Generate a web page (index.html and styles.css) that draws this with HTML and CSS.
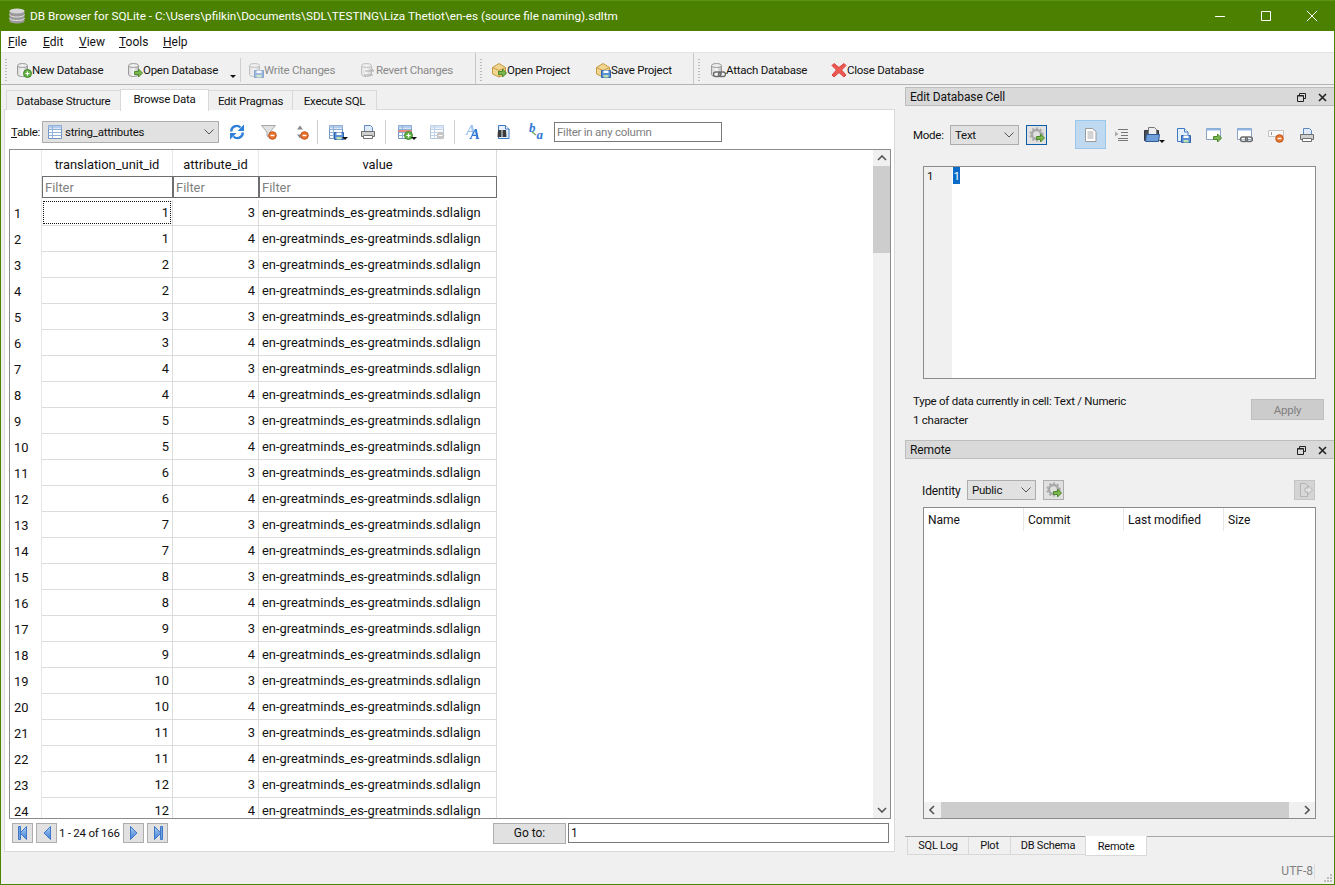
FILE: index.html
```html
<!DOCTYPE html>
<html lang="en">
<head>
    <meta charset="UTF-8">
    <title>DB Browser for SQLite</title>
    <link rel="stylesheet" href="styles.css">
</head>
<body>
    <svg class="sprites" width="0" height="0">
        <defs>
            <linearGradient id="steel" x1="0" x2="1" y1="0" y2="0">
                <stop offset="0" stop-color="#d8d8d8"/><stop offset=".5" stop-color="#f6f6f6"/><stop offset="1" stop-color="#b4b4b4"/>
            </linearGradient>
            <linearGradient id="blue" x1="0" x2="0" y1="0" y2="1">
                <stop offset="0" stop-color="#a9cdf4"/><stop offset="1" stop-color="#3f7fd4"/>
            </linearGradient>
            <symbol id="stack" viewBox="0 0 16 16">
                <path d="M.5 3v10c0 1.400 3.300 2.500 7.500 2.500s7.500-1.100 7.500-2.500V3z" fill="#9a9a9a"/>
                <ellipse cx="8" cy="3" rx="7.500" ry="2.500" fill="#d6d6d6"/>
                <path d="M.5 6.500c0 1.400 3.300 2.500 7.500 2.500s7.500-1.100 7.500-2.500M.5 10c0 1.400 3.300 2.500 7.500 2.500s7.500-1.100 7.500-2.500" fill="none" stroke="#e6e6e6"/>
            </symbol>
            <symbol id="db" viewBox="0 0 16 16">
                <path d="M1.500 3.500v9c0 1.200 2.200 2 5 2s5-.8 5-2v-9z" fill="url(#steel)" stroke="#9a9a9a"/>
                <ellipse cx="6.500" cy="3.500" rx="5" ry="2" fill="#eee" stroke="#9a9a9a"/>
            </symbol>
            <symbol id="green-arrow" viewBox="0 0 16 16">
                <path d="M7.500 9.500h4V7l4 4-4 4v-2.500h-4z" fill="#7db650" stroke="#4c8a2c"/>
            </symbol>
            <symbol id="plus-badge" viewBox="0 0 16 16">
                <circle cx="11.500" cy="11.500" r="4" fill="#66b04a" stroke="#3f8a2c"/>
                <path d="M11.500 9.500v4M9.500 11.500h4" stroke="#fff" stroke-width="1.200"/>
            </symbol>
            <symbol id="minus-badge" viewBox="0 0 16 16">
                <circle cx="11.500" cy="11.500" r="3.800" fill="#e8732c" stroke="#c2541a"/>
                <path d="M9.500 11.500h4" stroke="#fff" stroke-width="1.400"/>
            </symbol>
            <symbol id="floppy" viewBox="0 0 16 16">
                <path d="M6.500 8.500h9v7h-9z" fill="#5b8fd6" stroke="#2f64ad"/>
                <path d="M8.500 8.500h5v2.500h-5z" fill="#fff"/>
                <path d="M8.500 13h5v2.500h-5z" fill="#bfe0b0"/>
            </symbol>
            <symbol id="box" viewBox="0 0 16 16">
                <path d="M1.500 5.500 8 1.500l6.500 4v7L8 15l-6.500-3z" fill="#f2d58e" stroke="#c49a45"/>
                <path d="M1.500 5.500 8 8.500l6.500-3M8 8.500V15" fill="none" stroke="#c49a45"/>
            </symbol>
            <symbol id="page" viewBox="0 0 16 16">
                <path d="M2.500 1.500h7l3.500 3.500v9.500h-10.500z" fill="#e6f0fb" stroke="#3d78c4"/>
                <path d="M9.500 1.500V5H13" fill="#fff" stroke="#3d78c4"/>
            </symbol>
            <symbol id="printer" viewBox="0 0 16 16">
                <path d="M4.500 1.500h6l2 2v4h-8z" fill="#dfeafa" stroke="#5d89c0"/>
                <path d="M1.500 7.500h13v5h-13z" fill="#cfcfcf" stroke="#6f6f6f"/>
                <path d="M3.500 11.500h9v3h-9z" fill="#fff" stroke="#6f6f6f"/>
            </symbol>
            <symbol id="grid" viewBox="0 0 16 16">
                <path d="M1.500 1.500h13v13h-13z" fill="#fff" stroke="#6f94c4"/>
                <path d="M1.500 1.500h13v3h-13z" fill="#b5cdec"/>
                <path d="M5.500 1.500v13M1.500 5.500h13M1.500 8.500h13M1.500 11.500h13" stroke="#8fb0d8"/>
            </symbol>
            <symbol id="window" viewBox="0 0 16 16">
                <path d="M.5 1.500h14v11H.5z" fill="#fff" stroke="#8ba3c2"/>
                <path d="M.5 1.500h14v2H.5z" fill="#8db6e6"/>
            </symbol>
            <symbol id="gear" viewBox="0 0 16 16">
                <circle cx="7.500" cy="7.500" r="4.500" fill="none" stroke="#a8a8a8" stroke-width="2.400"/>
                <circle cx="7.500" cy="7.500" r="6.200" fill="none" stroke="#a8a8a8" stroke-width="1.800" stroke-dasharray="2 2"/>
            </symbol>
            <symbol id="blue-tri" viewBox="0 0 16 16">
                <path d="M11.500 1.500v13L5 8z" fill="url(#blue)" stroke="#3f78c6"/>
            </symbol>
            <symbol id="chain" viewBox="0 0 16 16">
                <rect x="3.500" y="10" width="7" height="4.500" rx="2.200" fill="#fff" fill-opacity=".4" stroke="#6c6c6c" stroke-width="1.400"/>
                <rect x="8.500" y="10" width="7" height="4.500" rx="2.200" fill="none" stroke="#6c6c6c" stroke-width="1.400"/>
            </symbol>
        </defs>
    </svg>

    <div class="window">
        <div class="titlebar">
            <svg class="ico title-ico"><use href="#stack"/></svg>
            <span class="title-text">DB Browser for SQLite - C:\Users\pfilkin\Documents\SDL\TESTING\Liza Thetiot\en-es (source file naming).sdltm</span>
            <div class="win-btns">
                <svg width="46" height="30" viewBox="0 0 46 30"><path d="M18 15.500h10" stroke="#fff"/></svg>
                <svg width="46" height="30" viewBox="0 0 46 30"><path d="M18.500 10.500h9v9h-9z" fill="none" stroke="#fff"/></svg>
                <svg width="46" height="30" viewBox="0 0 46 30"><path d="M18 10l10 10M28 10 18 20" stroke="#fff"/></svg>
            </div>
        </div>

        <div class="menubar">
            <span class="menu-file"><u>F</u>ile</span>
            <span class="menu-edit"><u>E</u>dit</span>
            <span class="menu-view"><u>V</u>iew</span>
            <span class="menu-tools"><u>T</u>ools</span>
            <span class="menu-help"><u>H</u>elp</span>
        </div>

        <div class="toolbars">
            <div class="toolbar tb-file">
                <i class="grip"></i>
                <span class="tool"><svg class="ico"><use href="#db"/><use href="#plus-badge"/></svg>New Database</span>
                <span class="tool"><svg class="ico"><use href="#db"/><use href="#green-arrow"/></svg>Open Database</span>
                <i class="drop"></i>
                <i class="vsep"></i>
                <span class="tool off"><svg class="ico dim"><use href="#db"/><use href="#floppy"/></svg>Write Changes</span>
                <span class="tool off"><svg class="ico dim"><use href="#db"/><path d="M5 9h9M14 9l-2-2M13 13H4M4 13l2 2" stroke="#777" fill="none"/></svg>Revert Changes</span>
            </div>
            <div class="toolbar tb-project">
                <i class="grip"></i>
                <span class="tool"><svg class="ico"><use href="#box"/><use href="#green-arrow"/></svg>Open Project</span>
                <span class="tool"><svg class="ico"><use href="#box"/><use href="#floppy"/></svg>Save Project</span>
            </div>
            <div class="toolbar tb-attach">
                <i class="grip"></i>
                <span class="tool"><svg class="ico"><use href="#db"/><use href="#chain"/></svg>Attach Database</span>
                <span class="tool"><svg class="ico"><path d="M3 1.500 8 5.500l5-4 2 2-4.500 4.500 4.500 5-2 2-5-4.500-5 4.500-2-2L5.500 8 1 3.500z" fill="#ee5a52" stroke="#d8403a"/></svg>Close Database</span>
            </div>
        </div>

        <div class="workspace">
            <div class="left-pane">
                <div class="tabs">
                    <span class="tab tab-structure">Database Structure</span>
                    <span class="tab tab-browse active">Browse Data</span>
                    <span class="tab tab-pragmas">Edit Pragmas</span>
                    <span class="tab tab-sql">Execute SQL</span>
                </div>
                <div class="tab-page">
                    <div class="browse-bar">
                        <span class="table-label"><u>T</u>able:</span>
                        <div class="combo table-combo">
                            <svg class="ico"><use href="#grid"/></svg>
                            <span class="combo-text">string_attributes</span>
                            <svg class="chev" viewBox="0 0 10 6"><path d="M.5.500 5 5 9.500.500" fill="none" stroke="#555"/></svg>
                        </div>
                        <svg class="ico bi-refresh" viewBox="0 0 16 16"><path d="M2.200 7.500A5.500 5.500 0 0 1 11.500 3.500M13.800 8.500A5.500 5.500 0 0 1 4.500 12.500" fill="none" stroke="#2f80d8" stroke-width="2.400"/><path d="M15 .5v6.500H8.500zM1 15.500V9h6.500z" fill="#2f80d8"/></svg>
                        <svg class="ico bi-filter"><path d="M.5 1.500h14L9 8v6l-3-2V8z" fill="#e2e2e2" stroke="#a8a8a8"/><use href="#minus-badge"/></svg>
                        <svg class="ico bi-sort"><path d="M7 1.500l3 4H4zM7 14.500l-3-4h6z" fill="#8a8a8a"/><use href="#minus-badge"/></svg>
                        <i class="vsep bi-sep1"></i>
                        <svg class="ico bi-save"><use href="#grid"/><use href="#floppy"/></svg><i class="drop bi-drop1"></i>
                        <svg class="ico bi-print"><use href="#printer"/></svg>
                        <i class="vsep bi-sep2"></i>
                        <svg class="ico bi-add"><use href="#grid"/><path d="M1.500 6h13v2h-13z" fill="#ee8a80"/><use href="#plus-badge"/></svg><i class="drop bi-drop2"></i>
                        <svg class="ico bi-del dim"><use href="#grid"/><circle cx="11.500" cy="11.500" r="3.800" fill="#999"/><path d="M9.500 11.500h4" stroke="#fff"/></svg>
                        <i class="vsep bi-sep3"></i>
                        <svg class="ico bi-font" viewBox="0 0 16 16"><text x="4" y="15" class="glyph echo">A</text></svg>
                        <svg class="ico bi-find"><use href="#page"/><path d="M2 6h3.500v7H1.500zM6.500 6H10l.5 7h-4z" fill="#3b3b3b"/></svg>
                        <svg class="ico bi-replace" viewBox="0 0 16 16"><text x="1" y="8" class="glyph small">b<tspan dx="1" dy="7">a</tspan></text><path d="M4 8l4 3" stroke="#6aa84f" stroke-width="1.200"/></svg>
                        <input class="field any-filter" placeholder="Filter in any column">
                    </div>

                    <div class="data-view">
                        <div class="data-scroll">
                            <table class="data">
                                <colgroup><col class="c-num"><col class="c-unit"><col class="c-attr"><col class="c-val"></colgroup>
                                <thead>
                                    <tr class="head"><th></th><th>translation_unit_id</th><th>attribute_id</th><th>value</th></tr>
                                    <tr class="filters"><th></th><th><span class="cell-filter">Filter</span></th><th><span class="cell-filter">Filter</span></th><th><span class="cell-filter">Filter</span></th></tr>
                                </thead>
                                <tbody>
                                    <tr><th>1</th><td class="current"><span>1</span></td><td>3</td><td>en-greatminds_es-greatminds.sdlalign</td></tr>
                                    <tr><th>2</th><td>1</td><td>4</td><td>en-greatminds_es-greatminds.sdlalign</td></tr>
                                    <tr><th>3</th><td>2</td><td>3</td><td>en-greatminds_es-greatminds.sdlalign</td></tr>
                                    <tr><th>4</th><td>2</td><td>4</td><td>en-greatminds_es-greatminds.sdlalign</td></tr>
                                    <tr><th>5</th><td>3</td><td>3</td><td>en-greatminds_es-greatminds.sdlalign</td></tr>
                                    <tr><th>6</th><td>3</td><td>4</td><td>en-greatminds_es-greatminds.sdlalign</td></tr>
                                    <tr><th>7</th><td>4</td><td>3</td><td>en-greatminds_es-greatminds.sdlalign</td></tr>
                                    <tr><th>8</th><td>4</td><td>4</td><td>en-greatminds_es-greatminds.sdlalign</td></tr>
                                    <tr><th>9</th><td>5</td><td>3</td><td>en-greatminds_es-greatminds.sdlalign</td></tr>
                                    <tr><th>10</th><td>5</td><td>4</td><td>en-greatminds_es-greatminds.sdlalign</td></tr>
                                    <tr><th>11</th><td>6</td><td>3</td><td>en-greatminds_es-greatminds.sdlalign</td></tr>
                                    <tr><th>12</th><td>6</td><td>4</td><td>en-greatminds_es-greatminds.sdlalign</td></tr>
                                    <tr><th>13</th><td>7</td><td>3</td><td>en-greatminds_es-greatminds.sdlalign</td></tr>
                                    <tr><th>14</th><td>7</td><td>4</td><td>en-greatminds_es-greatminds.sdlalign</td></tr>
                                    <tr><th>15</th><td>8</td><td>3</td><td>en-greatminds_es-greatminds.sdlalign</td></tr>
                                    <tr><th>16</th><td>8</td><td>4</td><td>en-greatminds_es-greatminds.sdlalign</td></tr>
                                    <tr><th>17</th><td>9</td><td>3</td><td>en-greatminds_es-greatminds.sdlalign</td></tr>
                                    <tr><th>18</th><td>9</td><td>4</td><td>en-greatminds_es-greatminds.sdlalign</td></tr>
                                    <tr><th>19</th><td>10</td><td>3</td><td>en-greatminds_es-greatminds.sdlalign</td></tr>
                                    <tr><th>20</th><td>10</td><td>4</td><td>en-greatminds_es-greatminds.sdlalign</td></tr>
                                    <tr><th>21</th><td>11</td><td>3</td><td>en-greatminds_es-greatminds.sdlalign</td></tr>
                                    <tr><th>22</th><td>11</td><td>4</td><td>en-greatminds_es-greatminds.sdlalign</td></tr>
                                    <tr><th>23</th><td>12</td><td>3</td><td>en-greatminds_es-greatminds.sdlalign</td></tr>
                                    <tr><th>24</th><td>12</td><td>4</td><td>en-greatminds_es-greatminds.sdlalign</td></tr>
                                </tbody>
                            </table>
                        </div>
                        <div class="vscroll">
                            <svg class="sb-arrow" viewBox="0 0 10 6"><path d="M1 5 5 1l4 4" fill="none" stroke="#555" stroke-width="1.600"/></svg>
                            <div class="vtrack"><div class="vthumb"></div></div>
                            <svg class="sb-arrow" viewBox="0 0 10 6"><path d="M1 1l4 4 4-4" fill="none" stroke="#555" stroke-width="1.600"/></svg>
                        </div>
                    </div>

                    <div class="pager">
                        <span class="nav-btn"><svg class="ico"><path d="M3.500 1.500h2v13h-2z" fill="#6a9fe4" stroke="#3f78c6"/><use href="#blue-tri"/></svg></span>
                        <span class="nav-btn"><svg class="ico"><use href="#blue-tri"/></svg></span>
                        <span class="page-info">1 - 24 of 166</span>
                        <span class="nav-btn"><svg class="ico flip"><use href="#blue-tri"/></svg></span>
                        <span class="nav-btn"><svg class="ico flip"><path d="M3.500 1.500h2v13h-2z" fill="#6a9fe4" stroke="#3f78c6"/><use href="#blue-tri"/></svg></span>
                        <span class="goto-btn">Go to:</span>
                        <input class="field goto-field" value="1">
                    </div>
                </div>
            </div>

            <div class="right-pane">
                <div class="dock-title">
                    <span>Edit Database Cell</span>
                    <svg class="dock-ico" viewBox="0 0 9 9"><path d="M2.500 2V.500h6v5H7M.500 2.500h6v6h-6z" fill="none" stroke="#222"/><path d="M.5 3h6" stroke="#222"/></svg>
                    <svg class="dock-ico" viewBox="0 0 9 9"><path d="M1 1l7 7M8 1 1 8" stroke="#222" stroke-width="1.600"/></svg>
                </div>
                <div class="mode-bar">
                    <span class="mode-label">Mode:</span>
                    <div class="combo mode-combo"><span class="combo-text">Text</span><svg class="chev" viewBox="0 0 10 6"><path d="M.5.500 5 5 9.500.500" fill="none" stroke="#555"/></svg></div>
                    <span class="gear-btn focus"><svg class="ico"><use href="#gear"/><use href="#green-arrow"/></svg></span>
                    <span class="mode-active"><svg class="ico"><path d="M2.500 1.500h7l3.500 3v10h-10.500z" fill="#fff" stroke="#9a9a9a"/><path d="M4.500 5h6M4.500 7h6M4.500 9h6M4.500 11h6" stroke="#a8a8a8"/></svg></span>
                    <svg class="ico m-indent"><path d="M4 2.500h10M7 5.500h7M7 8.500h7M4 11.500h10M4 13.500h10" stroke="#777"/><path d="M1 4.500 4.500 7 1 9.500z" fill="#aaa"/></svg>
                    <svg class="ico m-open"><path d="M.5 3.500h14v10H.5z" fill="#4a4f58" stroke="#33373d"/><path d="M4.500 .5h6l2 2v5h-8z" fill="#eee" stroke="#777"/><path d="M2.500 7.500h13l-1 7H1.500z" fill="#6f9fd8" stroke="#2f5c96"/></svg><i class="drop m-drop"></i>
                    <svg class="ico m-save"><use href="#page"/><use href="#floppy"/></svg>
                    <svg class="ico m-import"><use href="#window"/><use href="#green-arrow"/></svg>
                    <svg class="ico m-link"><use href="#window"/><use href="#chain"/></svg>
                    <svg class="ico m-null"><path d="M.5 3.500h15v6H.5z" fill="#f8f8f8" stroke="#c4c4c4"/><path d="M3.500 5v3" stroke="#999"/><use href="#minus-badge"/></svg>
                    <svg class="ico m-print"><use href="#printer"/></svg>
                </div>
                <div class="editor">
                    <div class="gutter">1</div>
                    <div class="edit-text"><span class="sel">1</span></div>
                </div>
                <div class="cell-info">
                    <div class="info-lines">
                        <div class="info-type">Type of data currently in cell: Text / Numeric</div>
                        <div class="info-size">1 character</div>
                    </div>
                    <span class="apply-btn">Apply</span>
                </div>
                <div class="dock-title remote-title">
                    <span>Remote</span>
                    <svg class="dock-ico" viewBox="0 0 9 9"><path d="M2.500 2V.500h6v5H7M.500 2.500h6v6h-6z" fill="none" stroke="#222"/><path d="M.5 3h6" stroke="#222"/></svg>
                    <svg class="dock-ico" viewBox="0 0 9 9"><path d="M1 1l7 7M8 1 1 8" stroke="#222" stroke-width="1.600"/></svg>
                </div>
                <div class="identity-bar">
                    <span class="identity-label">Identity</span>
                    <div class="combo identity-combo"><span class="combo-text">Public</span><svg class="chev" viewBox="0 0 10 6"><path d="M.5.500 5 5 9.500.500" fill="none" stroke="#555"/></svg></div>
                    <span class="gear-btn"><svg class="ico"><use href="#gear"/><use href="#green-arrow"/></svg></span>
                    <span class="push-btn"><svg class="ico dim"><path d="M3.500 1.500h5l2 2v11h-7z" fill="#ddd" stroke="#999"/><path d="M8 6h3V3.500L15.500 8 11 12.500V10H8z" fill="#eee" stroke="#999"/></svg></span>
                </div>
                <div class="remote-tree">
                    <div class="tree-head">
                        <span>Name</span><span>Commit</span><span>Last modified</span><span>Size</span>
                    </div>
                    <div class="tree-body"></div>
                    <div class="hscroll">
                        <svg class="sb-side" viewBox="0 0 6 10"><path d="M5 1 1 5l4 4" fill="none" stroke="#555" stroke-width="1.600"/></svg>
                        <div class="hthumb"></div>
                        <svg class="sb-side" viewBox="0 0 6 10"><path d="M1 1l4 4-4 4" fill="none" stroke="#555" stroke-width="1.600"/></svg>
                    </div>
                </div>
                <div class="dock-tabs">
                    <span class="dtab dt-log">SQL Log</span>
                    <span class="dtab dt-plot">Plot</span>
                    <span class="dtab dt-schema">DB Schema</span>
                    <span class="dtab dt-remote active">Remote</span>
                </div>
                <div class="statusbar">
                    <span class="encoding">UTF-8</span>
                    <svg class="size-grip" viewBox="0 0 8 8"><path d="M6 0h2v2H6zM3 3h2v2H3zM6 3h2v2H6zM0 6h2v2H0zM3 6h2v2H3zM6 6h2v2H6z" fill="#bdbdbd"/></svg>
                </div>
            </div>
        </div>
    </div>
</body>
</html>
```

FILE: styles.css
```css
* {
    margin: 0;
    padding: 0;
    box-sizing: border-box;
}

html, body {
    width: 1335px;
    height: 885px;
    overflow: hidden;
}

body {
    font-family: Roboto, "Noto Sans", sans-serif;
    font-size: 11.5px;
    letter-spacing: -0.25px;
    color: #111;
    background-color: #f0f0f0;
}

.sprites {
    display: block;
    height: 0;
}

.window {
    width: 1335px;
    height: 885px;
    display: flex;
    flex-direction: column;
    border: 1px solid #4c8400;
    border-width: 0 1px 1px;
    background-color: #f0f0f0;
}

.ico {
    display: block;
    width: 16px;
    height: 16px;
    flex-shrink: 0;
    overflow: visible;
}

.dim {
    opacity: 0.55;
}

.flip {
    transform: scaleX(-1);
}

/* Title bar */
.titlebar {
    height: 31px;
    margin: 0 -1px;
    padding-left: 9px;
    display: flex;
    align-items: center;
    background-color: #4c8000;
    border-top: 1px solid #5c9414;
    color: #fff;
    font-size: 11.75px;
    letter-spacing: 0;
}

.title-text {
    margin-left: 5px;
}

.win-btns {
    margin-left: auto;
    display: flex;
}

/* Menu */
.menubar {
    height: 21px;
    background-color: #fff;
    display: flex;
    align-items: center;
    padding: 1px 0 0 7px;
    font-size: 12px;
    letter-spacing: 0;
}

.menubar span {
    width: 36px;
}

.menubar .menu-file { width: 35px; }
.menubar .menu-view { width: 40px; }
.menubar .menu-tools { width: 44px; }

/* Main toolbars */
.toolbars {
    height: 33px;
    display: flex;
    border-top: 1px solid #e4e4e4;
    border-bottom: 1px solid #b4b4b4;
}

.toolbar {
    display: grid;
    align-items: center;
    border-right: 1px solid #c8c8c8;
    height: 31px;
    padding-top: 2px;
}

.tb-file {
    width: 475px;
    grid-template-columns: 15px 111px 103px 10px 8px 112px 100px;
}

.tb-project {
    width: 218px;
    grid-template-columns: 15px 104px 90px;
}

.tb-attach {
    width: 260px;
    grid-template-columns: 16px 121px 110px;
    border-right: 0;
}

.grip {
    display: block;
    width: 2px;
    height: 22px;
    margin-left: 4px;
    background-image: linear-gradient(#bbb 50%, transparent 50%);
    background-size: 2px 3px;
}

.tool {
    display: flex;
    align-items: center;
    white-space: nowrap;
}

.tool.off {
    color: #8a8a8a;
}

.drop {
    display: block;
    width: 0;
    height: 0;
    border: 3px solid transparent;
    border-top: 3px solid #111;
    border-bottom: 0;
}

.tb-file .drop {
    margin-top: 14px;
}

.vsep {
    display: block;
    width: 1px;
    height: 24px;
    background-color: #cfcfcf;
}

/* Workspace */
.workspace {
    flex: 1;
    display: flex;
    min-height: 0;
}

.left-pane {
    width: 904px;
    padding: 3px 0 0 3px;
}

.tabs {
    height: 22px;
    display: flex;
    align-items: flex-end;
    padding-left: 2px;
    position: relative;
    z-index: 1;
}

.tab {
    height: 20px;
    display: flex;
    align-items: center;
    justify-content: center;
    background-color: #f0f0f0;
    border: 1px solid #d9d9d9;
    border-bottom: 0;
    margin-right: -1px;
}

.tab-structure { width: 115px; }
.tab-browse { width: 89px; }
.tab-pragmas { width: 85px; }
.tab-sql { width: 85px; }

.tab.active {
    height: 22px;
    background-color: #fff;
    margin-bottom: -1px;
    position: relative;
    z-index: 2;
    padding-bottom: 3px;
}

.tab-page {
    width: 891px;
    height: 743px;
    background-color: #fff;
    border: 1px solid #d9d9d9;
    margin-top: -1px;
    padding: 10px 4px 0 4px;
}

.browse-bar {
    height: 23px;
    display: flex;
    align-items: center;
    padding-left: 2px;
}

.table-label {
    width: 31px;
}

.combo {
    height: 22px;
    display: flex;
    align-items: center;
    background-color: #e1e1e1;
    border: 1px solid #adadad;
    padding-left: 4px;
}

.table-combo {
    width: 177px;
    gap: 2px;
}

.combo-text {
    flex: 1;
}

.chev {
    width: 10px;
    height: 6px;
    margin-right: 4px;
}

.bi-refresh { margin-left: 10px; }
.bi-filter { margin-left: 16px; }
.bi-sort { margin-left: 16px; }
.bi-sep1 { margin-left: 8px; }
.bi-save { margin-left: 10px; }
.bi-drop1 { margin: 14px 0 0 -2px; }
.bi-print { margin-left: 12px; }
.bi-sep2 { margin-left: 9px; }
.bi-add { margin-left: 11px; }
.bi-drop2 { margin: 14px 0 0 -2px; }
.bi-del { margin-left: 12px; }
.bi-sep3 { margin-left: 9px; }
.bi-font { margin-left: 11px; }
.bi-find { margin-left: 14px; }
.bi-replace { margin-left: 16px; }

.glyph {
    font-family: "Liberation Serif", serif;
    font-weight: bold;
    font-style: italic;
    font-size: 15px;
    letter-spacing: 0;
    fill: #2f78d6;
}

/* back letter of the font icon */
.glyph.echo {
    filter: drop-shadow(-4px -4px 0 #9cc2ee);
}

.glyph.small {
    font-size: 13px;
}

.field {
    display: block;
    font: inherit;
    letter-spacing: inherit;
    color: #111;
    border: 1px solid #7a7a7a;
    background-color: #fff;
    padding: 0 2px;
    outline: none;
}

.field::placeholder {
    color: #808080;
    opacity: 1;
}

.any-filter {
    margin-left: 10px;
    width: 168px;
    height: 20px;
}

/* Data grid */
.data-view {
    width: 882px;
    height: 670px;
    margin-top: 6px;
    display: flex;
    border: 1px solid #8c8c8c;
}

.data-scroll {
    flex: 1;
    overflow: hidden;
}

.data {
    border-collapse: separate;
    border-spacing: 0;
    table-layout: fixed;
    width: 487px;
    font-size: 12.9px;
    letter-spacing: 0;
}

.c-num { width: 32px; }
.c-unit { width: 131px; }
.c-attr { width: 86px; }
.c-val { width: 238px; }

.data th, .data td {
    font-weight: normal;
    white-space: nowrap;
    overflow: hidden;
}

.head th {
    height: 26px;
    padding-top: 2px;
    text-align: center;
    border-right: 1px solid #e6e6e6;
    background-color: #fff;
}

.head th:last-child {
    border-right: 1px solid #d9d9d9;
}

.filters th {
    height: 24px;
    padding: 0 0 1px 0;
    vertical-align: top;
}

.filters th:first-child {
    border-right: 1px solid #e6e6e6;
}

.cell-filter {
    display: block;
    height: 22px;
    line-height: 21px;
    text-align: left;
    color: #808080;
    padding-left: 2px;
    border: 1px solid #6e6e6e;
}

tbody th {
    text-align: left;
    padding: 0 0 0 4px;
    height: 26px;
    border-right: 1px solid #e6e6e6;
}

tbody td {
    height: 26px;
    text-align: right;
    padding: 0 3px;
    border-right: 1px solid #dcdcdc;
    border-bottom: 1px solid #dcdcdc;
}

tbody td:last-child {
    text-align: left;
}

.current {
    padding: 1px;
}

.current span {
    display: block;
    height: 23px;
    line-height: 22px;
    padding-right: 1px;
    border: 1px dotted #111;
}

.vscroll {
    width: 17px;
    display: flex;
    flex-direction: column;
    align-items: center;
    background-color: #f0f0f0;
}

.sb-arrow {
    width: 10px;
    height: 6px;
    margin: 5px 0;
    flex-shrink: 0;
}

.vtrack {
    flex: 1;
    width: 17px;
}

.vthumb {
    height: 87px;
    background-color: #cdcdcd;
}

/* Pager */
.pager {
    height: 20px;
    margin-top: 4px;
    display: flex;
    align-items: center;
    padding-left: 3px;
}

.nav-btn {
    width: 21px;
    height: 20px;
    display: flex;
    align-items: center;
    justify-content: center;
    background-color: #e1e1e1;
    border: 1px solid #adadad;
    margin-right: 3px;
}

.page-info {
    width: 64px;
    white-space: nowrap;
    margin-left: -1px;
}

.goto-btn {
    width: 73px;
    height: 21px;
    display: flex;
    align-items: center;
    justify-content: center;
    margin-left: 322px;
    font-size: 12px;
    letter-spacing: 0;
    background-color: #e1e1e1;
    border: 1px solid #adadad;
}

.goto-field {
    width: 321px;
    height: 20px;
    margin-left: 2px;
    font-size: 12px;
}

/* Right docks */
.right-pane {
    width: 429px;
    padding-top: 2px;
    display: flex;
    flex-direction: column;
}

.dock-title {
    height: 19px;
    display: flex;
    align-items: center;
    gap: 12px;
    padding: 1px 7px 0 4px;
    font-size: 12px;
    letter-spacing: -0.1px;
    background-color: #d9d9d9;
    border: 1px solid #bdbdbd;
    border-right: 0;
}

.dock-title span {
    flex: 1;
}

.dock-ico {
    width: 9px;
    height: 9px;
}

.mode-bar {
    height: 60px;
    display: flex;
    align-items: center;
    padding: 0 0 3px 8px;
}

.mode-label {
    width: 37px;
}

.mode-combo {
    width: 69px;
    height: 20px;
}

.gear-btn {
    width: 21px;
    height: 20px;
    display: flex;
    align-items: center;
    justify-content: center;
    margin-left: 7px;
    background-color: #e1e1e1;
    border: 1px solid #adadad;
}

.gear-btn.focus {
    border-color: #0a5da8;
}

.mode-active {
    width: 31px;
    height: 29px;
    display: flex;
    align-items: center;
    justify-content: center;
    margin-left: 28px;
    background-color: #bfdaf0;
    border: 1px solid #99c8ea;
}

.m-indent { margin-left: 8px; }
.m-open { margin-left: 14px; }
.m-drop { margin: 14px 0 0 -1px; }
.m-save { margin-left: 10px; }
.m-import { margin-left: 15px; }
.m-link { margin-left: 15px; }
.m-null { margin-left: 15px; }
.m-print { margin-left: 15px; }

.editor {
    width: 393px;
    height: 213px;
    margin-left: 18px;
    display: flex;
    background-color: #fff;
    border: 1px solid #8c8c8c;
}

.gutter {
    width: 28px;
    padding: 2px 0 0 3px;
    background-color: #f0f0f0;
}

.edit-text {
    flex: 1;
    padding-left: 1px;
}

.sel {
    display: inline-block;
    width: 7px;
    height: 17px;
    line-height: 18px;
    text-align: center;
    color: #fff;
    background-color: #0a6cc8;
}

.cell-info {
    height: 61px;
    display: flex;
    padding: 14px 10px 0 8px;
    justify-content: space-between;
}

.info-type {
    height: 19px;
    line-height: 16px;
}

.info-size {
    line-height: 17px;
}

.apply-btn {
    width: 73px;
    height: 21px;
    display: flex;
    align-items: center;
    justify-content: center;
    margin-top: 6px;
    color: #808080;
    background-color: #cccccc;
    border: 1px solid #bfbfbf;
}

.identity-bar {
    height: 48px;
    display: flex;
    align-items: flex-start;
    padding: 21px 0 0 17px;
}

.identity-label {
    width: 45px;
    line-height: 22px;
    font-size: 12px;
    letter-spacing: -0.1px;
}

.identity-combo {
    width: 69px;
    height: 20px;
}

.push-btn {
    width: 21px;
    height: 20px;
    display: flex;
    align-items: center;
    justify-content: center;
    margin-left: 230px;
    background-color: #d4d4d4;
    border: 1px solid #c4c4c4;
}

.remote-tree {
    width: 393px;
    height: 312px;
    margin-left: 18px;
    display: flex;
    flex-direction: column;
    background-color: #fff;
    border: 1px solid #8c8c8c;
}

.tree-head {
    height: 23px;
    display: grid;
    grid-template-columns: 100px 100px 100px 92px;
    font-size: 12px;
    letter-spacing: 0;
}

.tree-head span {
    display: flex;
    align-items: center;
    padding-left: 4px;
    border-right: 1px solid #e6e6e6;
}

.tree-head span:last-child {
    border-right: 0;
}

.tree-body {
    flex: 1;
}

.hscroll {
    height: 16px;
    display: flex;
    align-items: center;
    background-color: #f0f0f0;
}

.hthumb {
    flex: 1;
    height: 16px;
    margin: 0 10px 0 1px;
    background-color: #cdcdcd;
}

.sb-side {
    width: 6px;
    height: 10px;
    margin: 0 5px;
    flex-shrink: 0;
}

.dock-tabs {
    height: 19px;
    margin-top: 17px;
    display: flex;
    padding-left: 2px;
    font-size: 11px;
    border-top: 1px solid #a8a8a8;
}

.dtab {
    height: 18px;
    display: flex;
    align-items: center;
    justify-content: center;
    background-color: #f0f0f0;
    border: 1px solid #d9d9d9;
    border-top: 0;
    margin-right: -1px;
}

.dt-log { width: 62px; }
.dt-plot { width: 43px; }
.dt-schema { width: 76px; }

.dtab.active {
    width: 62px;
    height: 20px;
    background-color: #fff;
    margin-top: -1px;
    padding-top: 2px;
}

.statusbar {
    flex: 1;
    display: flex;
    align-items: center;
    justify-content: flex-end;
    padding-top: 4px;
}

.encoding {
    color: #808080;
    font-size: 12px;
    letter-spacing: 0;
    padding-right: 1px;
    border-right: 1px solid #dcdcdc;
    height: 15px;
    line-height: 15px;
    margin-right: 9px;
}

.size-grip {
    width: 8px;
    height: 8px;
    margin: 12px 2px 0 0;
}
```
